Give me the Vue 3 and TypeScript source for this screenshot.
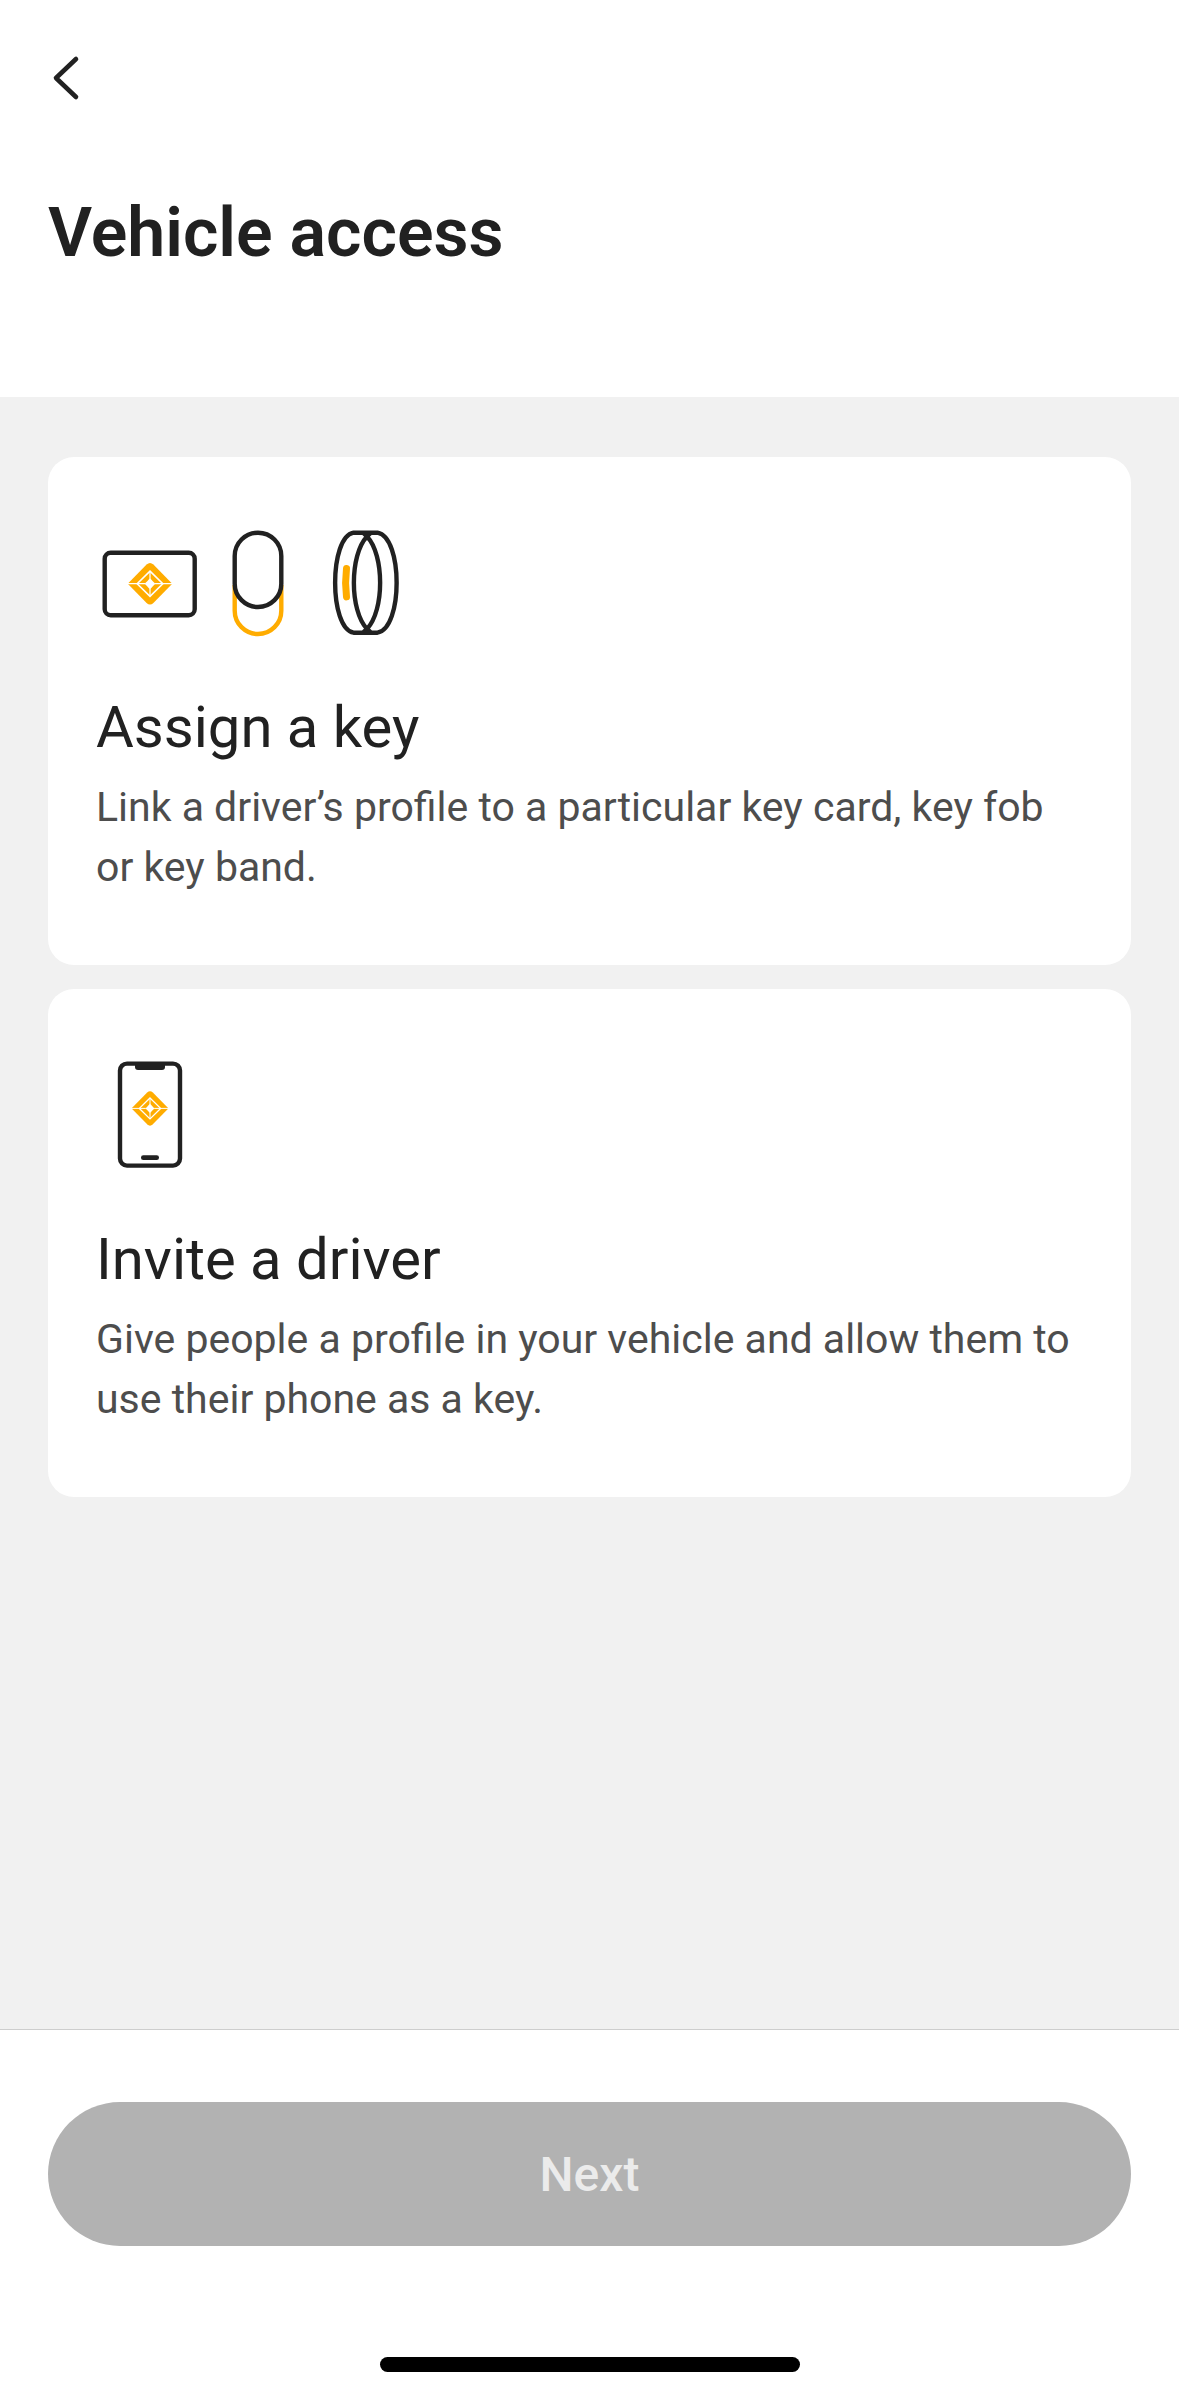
<script setup lang="ts">
import { ref } from 'vue'

type OptionId = 'assign' | 'invite'

interface AccessOption {
  id: OptionId
  title: string
  body: string
}

const options: AccessOption[] = [
  {
    id: 'assign',
    title: 'Assign a key',
    body: 'Link a driver’s profile to a particular key card, key fob or key band.',
  },
  {
    id: 'invite',
    title: 'Invite a driver',
    body: 'Give people a profile in your vehicle and allow them to use their phone as a key.',
  },
]

const selected = ref<OptionId | null>(null)
</script>

<template>
  <div class="screen">
    <header class="header">
      <button class="back" type="button" aria-label="Back">
        <svg class="back-icon" viewBox="0 0 72 72" aria-hidden="true">
          <path d="M28 17 8 36l20 19" />
        </svg>
      </button>
      <h1 class="title">Vehicle access</h1>
    </header>

    <main class="options">
      <button
        v-for="option in options"
        :key="option.id"
        class="card"
        type="button"
        :aria-pressed="selected === option.id"
        @click="selected = option.id"
      >
        <span v-if="option.id === 'assign'" class="icons">
          <!-- Key card -->
          <svg class="icon" viewBox="0 0 108 108" aria-hidden="true">
            <rect class="line" x="8.7" y="23.7" width="90" height="62.6" rx="6" />
            <g transform="translate(54 54.7)">
              <path class="mark" d="M-21.5-.8-3.4-19.2Q0-22.4 3.4-19.2L21.5-.8V.8L3.4 19.2Q0 22.4-3.4 19.2L-21.5 .8Z" />
              <path class="cut ring" d="M0-12.6 12.8 0 0 12.6-12.8 0Z" />
              <path class="cut" d="M-22 0H-5M5 0H22M0-12V-5M0 5V12" />
              <path class="hole" d="M0-5.8Q2.4-2.6 5.4 0 2.4 2.6 0 5.8-2.4 2.6-5.4 0-2.4-2.6 0-5.8Z" />
            </g>
          </svg>
          <!-- Key fob -->
          <svg class="icon" viewBox="0 0 108 108" aria-hidden="true">
            <path class="line accent" d="M30.7 56v25.7a23.3 23.3 0 0 0 46.6 0V56" />
            <rect class="line" x="30.7" y="3.7" width="46.6" height="74.3" rx="23.3" />
          </svg>
          <!-- Key band -->
          <svg class="icon" viewBox="0 0 108 108" aria-hidden="true">
            <path class="line accent tag" d="M34.5 39.5q-1.8 14.2 0 28.4" />
            <path
              class="line"
              d="M55 7.5C37.5 26 37.5 81.4 55 99.9C72.5 81.4 72.5 26 55 7.5M41.5 3.7H65.5C91 8 91 99.4 65.5 103.7H41.5C17 99.4 17 8 41.5 3.7ZM55 7.5 59 3.7M55 7.5 51 3.7M55 99.9 59 103.7M55 99.9 51 103.7"
            />
          </svg>
        </span>
        <span v-else class="icons">
          <!-- Phone -->
          <svg class="icon" viewBox="0 0 108 108" aria-hidden="true">
            <rect class="line" x="24" y="2.6" width="60" height="102" rx="7" />
            <path class="solid" d="M39 3h30v3q0 3-3 3H42q-3 0-3-3Z" />
            <rect class="solid" x="45" y="94.3" width="18" height="4.7" rx="2.3" />
            <g transform="translate(54 47.4) scale(.83)">
              <path class="mark" d="M-21.5-.8-3.4-19.2Q0-22.4 3.4-19.2L21.5-.8V.8L3.4 19.2Q0 22.4-3.4 19.2L-21.5 .8Z" />
              <path class="cut ring" d="M0-12.6 12.8 0 0 12.6-12.8 0Z" />
              <path class="cut" d="M-22 0H-5M5 0H22M0-12V-5M0 5V12" />
              <path class="hole" d="M0-5.8Q2.4-2.6 5.4 0 2.4 2.6 0 5.8-2.4 2.6-5.4 0-2.4-2.6 0-5.8Z" />
            </g>
          </svg>
        </span>
        <span class="card-title">{{ option.title }}</span>
        <span class="card-body">{{ option.body }}</span>
      </button>
    </main>

    <footer class="footer">
      <button class="next" type="button" :disabled="selected === null">Next</button>
      <div class="home-indicator"></div>
    </footer>
  </div>
</template>

<style>
body {
  margin: 0;
  background: #fff;
}
</style>

<style scoped>
.screen {
  display: flex;
  flex-direction: column;
  min-height: 100vh;
  background: #fff;
  color: #212121;
  font-family: Roboto, "Liberation Sans", sans-serif;
}

.screen *,
.screen {
  box-sizing: border-box;
}

button {
  margin: 0;
  border: 0;
  padding: 0;
  font: inherit;
  color: inherit;
  cursor: pointer;
}

.header {
  padding: 42px 48px 122px;
}

.back {
  display: block;
  width: 72px;
  height: 72px;
  background: none;
}

.back-icon {
  display: block;
  width: 72px;
  height: 72px;
  fill: none;
  stroke: #212121;
  stroke-width: 4.6;
  stroke-linecap: round;
  stroke-linejoin: round;
}

.title {
  margin: 77px 0 0;
  font-size: 68px;
  font-weight: 600;
  line-height: 84px;
}

.options {
  display: flex;
  flex: 1;
  flex-direction: column;
  gap: 24px;
  padding: 60px 48px;
  background: #f1f1f1;
}

.card {
  display: flex;
  flex-direction: column;
  padding: 72px 48px 68px;
  border-radius: 26px;
  background: #fff;
  text-align: left;
}

.icons {
  display: flex;
  margin-bottom: 48px;
}

.icon {
  display: block;
  width: 108px;
  height: 108px;
}

.line {
  fill: none;
  stroke: #212121;
  stroke-width: 4.4;
  stroke-linecap: butt;
  stroke-linejoin: round;
}

.accent {
  stroke: #ffac00;
}

.tag {
  stroke-width: 7;
  stroke-linecap: round;
}

.solid {
  fill: #212121;
}

.mark {
  fill: #ffac00;
}

.cut {
  fill: none;
  stroke: #fff;
  stroke-width: 1.2;
}

.ring {
  stroke-width: 1.6;
}

.hole {
  fill: #fff;
}

.card-title {
  margin-bottom: 8px;
  font-size: 58px;
  line-height: 84px;
}

.card-body {
  color: #4d4d4d;
  font-size: 41px;
  line-height: 60px;
}

.footer {
  display: flex;
  flex-direction: column;
  align-items: center;
  padding: 72px 48px 24px;
  border-top: 1px solid #cecece;
}

.next {
  width: 100%;
  height: 144px;
  border-radius: 72px;
  background: #212121;
  color: #fff;
  font-size: 48px;
  font-weight: 500;
}

.next:disabled {
  background: #b2b2b2;
  color: #ebebeb;
  cursor: default;
}

.home-indicator {
  width: 420px;
  max-width: 50%;
  height: 15px;
  margin-top: 111px;
  border-radius: 8px;
  background: #000;
}
</style>
